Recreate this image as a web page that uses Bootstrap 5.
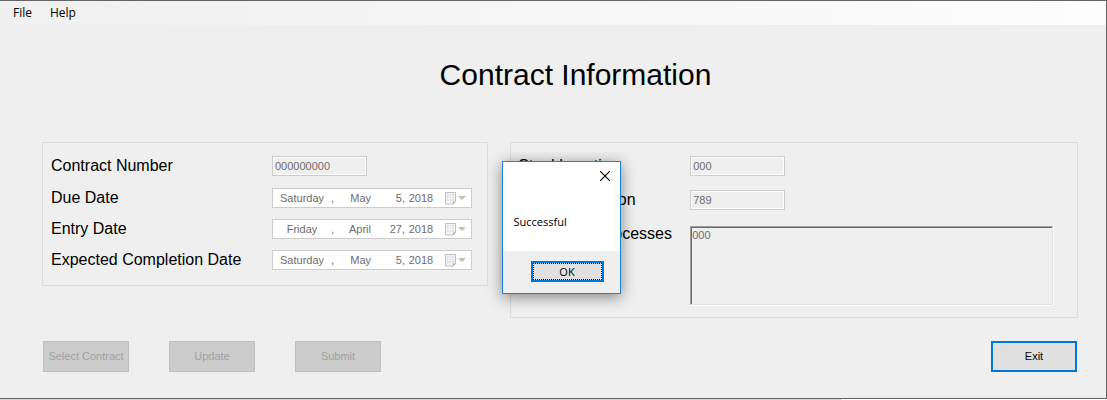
<!DOCTYPE html>
<html lang="en">
<head>
<meta charset="utf-8">
<meta name="viewport" content="width=device-width, initial-scale=1">
<title>Contract Information</title>
<link href="https://cdn.jsdelivr.net/npm/bootstrap@5.3.0/dist/css/bootstrap.min.css" rel="stylesheet">
<style>
  body { background: #fff; color: #000; font-family: "Liberation Sans", Arial, sans-serif; font-size: 16px; line-height: 20px; }
  .app-window { min-height: calc(100vh - 1px); background: #efefef; border: 1px solid #646464; border-left: 0; }
  .behind-strip { height: 1px; width: 76%; background: #ccd5e0; }
  .menu-strip { height: 24px; padding-left: 13px; gap: 18px; background: linear-gradient(90deg, #f0f0f0, #fdfdfd); font: 12px/24px "Open Sans", "Noto Sans", sans-serif; }
  .menu-strip a { color: #000; text-decoration: none; }
  .page-title { font-size: 30px; line-height: 36px; font-weight: 400; margin: 32px 0 49px; padding-left: 45px; }
  .form-area { padding: 0 28px 0 42px; }
  .panels { display: grid; grid-template-columns: 11fr 14fr; gap: 22px; align-items: start; }
  .panel { border: 1px solid #dcdcdc; padding: 12px 15px 15px 8px; }
  .panel-left { gap: 11px; }
  .panel-right { gap: 14px; padding: 13px 24px 12px 7px; }
  .field { display: grid; grid-template-columns: 221px 1fr; align-items: center; min-height: 20px; }
  .panel-left .field:first-child { min-height: 22px; }
  .panel-right .field { grid-template-columns: 172px 1fr; align-items: start; }
  .box { font-size: 11px; line-height: 14px; color: #6d6d6d; border-radius: 0; }
  .text-box { width: 95px; height: 20px; padding: 1px 2px; border: 1px solid #ccc; background: #efefef; box-shadow: inset 0 0 0 1px #fff; }
  .notes-box { width: 100%; height: 79px; margin-top: 2px; padding: 1px; resize: none; background: #efefef; border: 1px solid; border-color: #a0a0a0 #e3e3e3 #e3e3e3 #a0a0a0; box-shadow: inset 1px 1px 0 #696969, 1px 1px 0 #fff; }
  .date-box { display: grid; grid-template-columns: 44px 10px 37px 34px 32px 34px; width: 200px; height: 20px; padding: 0 0 0 7px; border: 1px solid #ccc; background: #fff; align-items: center; line-height: 18px; }
  .btn-plain { width: 86px; height: 31px; padding: 0; font-size: 11px; border-radius: 0; }
  .btn-plain:disabled { background: #ccc; border-color: #bfbfbf; color: #a0a0a0; opacity: 1; }
  .btn-exit { background: #e1e1e1; border: 2px solid #0078d7; color: #000; }
  .actions { padding: 23px 1px 25px; }
  .action-set { gap: 40px; }
  .message-box { position: absolute; top: 161px; left: calc(50% - 52px); width: 119px; background: #fff; border: 1px solid #1883d7; box-shadow: 0 3px 14px rgba(0,0,0,.45); font: 11px/16px "Open Sans", "Noto Sans", sans-serif; }
  .message-box .close-x { width: 10px; height: 10px; margin: 9px 10px 33px auto; padding: 0; border: 0; background: none; display: block; }
  .close-x svg { display: block; }
  .message-box p { margin: 0 0 21px 11px; }
  .message-foot { background: #efefef; padding: 10px 16px 11px 28px; }
  .btn-ok { width: 73px; height: 21px; padding: 0; border: 2px solid #0078d7; border-radius: 0; background: #e1e1e1; outline: 1px dotted #000; outline-offset: -3px; font-size: 11px; line-height: 17px; color: #000; }
</style>
</head>
<body>
<svg class="d-none" aria-hidden="true">
  <symbol id="calendar" viewBox="0 0 22 13">
    <path d="M.5.5h10v9l-2.500 2.500H.5z" fill="#f3f4f6" stroke="#c0c0c4"/>
    <path d="M2 2h7v7H2z" fill="#d5dbe4"/>
    <path d="M2 4.200h7M2 6.600h7M4.200 2v7M6.600 2v7" stroke="#fff" stroke-width=".8"/>
    <path d="M8 12V9.500h3z" fill="#aaa"/>
    <path d="M13 4h8l-4 4z" fill="#c1c1b8"/>
  </symbol>
</svg>
<div class="app-window">
  <nav class="menu-strip d-flex" aria-label="Menu">
    <a href="#">File</a>
    <a href="#">Help</a>
  </nav>
  <h1 class="page-title text-center">Contract Information</h1>
  <main class="form-area">
    <div class="panels">
      <section class="panel panel-left d-flex flex-column">
        <div class="field"><label for="number">Contract Number</label><input id="number" class="box text-box" type="text" value="000000000" disabled></div>
        <div class="field"><label for="due">Due Date</label>
          <button id="due" type="button" class="box date-box" disabled><span>Saturday</span><span class="text-end">,</span><span class="text-end">May</span><span class="text-end">5,</span><span class="text-center">2018</span><svg class="ms-auto me-1" width="22" height="13"><use href="#calendar"/></svg></button></div>
        <div class="field"><label for="entry">Entry Date</label>
          <button id="entry" type="button" class="box date-box" disabled><span>Friday</span><span class="text-end">,</span><span class="text-end">April</span><span class="text-end">27,</span><span class="text-center">2018</span><svg class="ms-auto me-1" width="22" height="13"><use href="#calendar"/></svg></button></div>
        <div class="field"><label for="expected">Expected Completion Date</label>
          <button id="expected" type="button" class="box date-box" disabled><span>Saturday</span><span class="text-end">,</span><span class="text-end">May</span><span class="text-end">5,</span><span class="text-center">2018</span><svg class="ms-auto me-1" width="22" height="13"><use href="#calendar"/></svg></button></div>
      </section>
      <section class="panel panel-right d-flex flex-column">
        <div class="field"><label for="location">Steel Location</label><input id="location" class="box text-box" type="text" value="000" disabled></div>
        <div class="field"><label for="description">Task Description</label><input id="description" class="box text-box" type="text" value="789" disabled></div>
        <div class="field"><label for="processes">Number of Processes</label><textarea id="processes" class="box notes-box" disabled>000</textarea></div>
      </section>
    </div>
    <div class="actions d-flex justify-content-between">
      <div class="action-set d-flex">
        <button type="button" class="btn btn-plain" disabled>Select Contract</button>
        <button type="button" class="btn btn-plain" disabled>Update</button>
        <button type="button" class="btn btn-plain" disabled>Submit</button>
      </div>
      <button type="button" class="btn btn-plain btn-exit">Exit</button>
    </div>
  </main>
</div>
<div class="behind-strip"></div>
<div class="message-box" role="dialog" aria-label="Message">
  <button type="button" class="close-x" aria-label="Close"><svg width="10" height="10" viewBox="0 0 10 10"><path d="M0 0l10 10M10 0L0 10" stroke="#000" stroke-width="1.100"/></svg></button>
  <p>Successful</p>
  <div class="message-foot"><button type="button" class="btn-ok d-block">OK</button></div>
</div>
<script src="https://cdn.jsdelivr.net/npm/bootstrap@5.3.0/dist/js/bootstrap.bundle.min.js"></script>
</body>
</html>
